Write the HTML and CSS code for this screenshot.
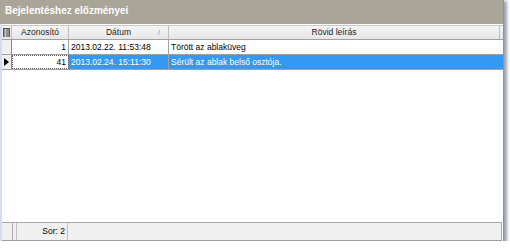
FILE: index.html
```html
<!DOCTYPE html>
<html>
<head>
<meta charset="utf-8">
<link rel="stylesheet" href="styles.css">
</head>
<body>
<div class="window">
  <div class="titlebar">Bejelentéshez előzményei</div>
  <div class="body">
    <div class="grid">
      <div class="row header">
        <div class="cell ind"><svg width="7" height="9" viewBox="0 0 7 9"><rect x="0" y="0" width="7" height="9" fill="#555"/><path d="M1 2h5M1 4h5M1 6h5M1 8h5" stroke="#ccc" stroke-width="1"/><path d="M2.5 1v8" stroke="#ccc"/></svg></div>
        <div class="cell id">Azonosító</div>
        <div class="cell date">Dátum<span class="sort">/</span></div>
        <div class="cell desc">Rövid leírás</div>
      </div>
      <div class="row">
        <div class="cell ind"></div>
        <div class="cell id num">1</div>
        <div class="cell date">2013.02.22. 11:53:48</div>
        <div class="cell desc">Törött az ablaküveg</div>
      </div>
      <div class="row selected">
        <div class="cell ind"><svg width="5" height="8" viewBox="0 0 5 8"><path d="M0 0L5 4L0 8Z" fill="#000"/></svg></div>
        <div class="cell id num focus">41</div>
        <div class="cell date">2013.02.24. 15:11:30</div>
        <div class="cell desc">Sérült az ablak belső osztója.</div>
      </div>
      <div class="filler"></div>
    </div>
    <div class="statusbar">
      <div class="sb-grip"></div>
      <div class="sb-panel">Sor: 2</div>
      <div class="sb-rest"></div>
    </div>
  </div>
</div>
</body>
</html>
```
FILE: styles.css
```css
html, body {
  margin: 0;
  padding: 0;
  background: #ffffff;
}
body {
  font-family: "Liberation Sans", Arial, sans-serif;
  font-size: 8.5px;
  color: #000;
}
.window {
  width: 503px;
  height: 241px;
  display: flex;
  flex-direction: column;
  box-shadow: 2px 2px 3px 1px rgba(120, 130, 145, 0.75);
  background: #fff;
  border-right: 1px solid #8e9296;
}
.titlebar {
  height: 24px;
  flex: none;
  background: #aaa697;
  color: #fff;
  font-weight: bold;
  font-size: 10px;
  line-height: 22px;
  padding-left: 5px;
}
.body {
  flex: 1;
  display: flex;
  flex-direction: column;
  border-left: 2px solid #d3deec;
  border-top: 1px solid #ffffff;
}
.grid {
  flex: 1;
  display: flex;
  flex-direction: column;
  background: #fff;
}
.row {
  display: flex;
  height: 14px;
  border-bottom: 1px solid #a0a0a0;
}
.row.header {
  height: 13px;
  background: linear-gradient(#f5f5f5, #e6e6e6);
  border-top: 1px solid #c9c9c9;
}
.cell {
  border-right: 1px solid #a0a0a0;
  line-height: 14px;
  white-space: nowrap;
  overflow: hidden;
  padding: 0 2px;
  box-sizing: border-box;
}
.header .cell {
  text-align: center;
  line-height: 13px;
  color: #222;
  border-right-color: #bdbdbd;
}
.ind {
  width: 10px;
  padding: 0;
  display: flex;
  align-items: center;
  justify-content: center;
  background: #f0f0f0;
  border-right-color: #8a8a8a;
}
.header .ind {
  background: transparent;
}
.id { width: 57px; }
.date {
  width: 100px;
  position: relative;
}
.desc {
  flex: 1;
  border-right: none;
}
.header .desc { border-right: 1px solid #bdbdbd; margin-right: 3px; }
.sort {
  position: absolute;
  right: 8px;
  top: 0;
  color: #888;
  font-size: 7px;
}
.num { text-align: right; }
.selected .date,
.selected .desc {
  background: #3399f3;
  color: #fff;
}
.selected .focus {
  background: #fff;
  outline: 1px dotted #555;
  outline-offset: -1px;
}
.filler { flex: 1; }
.statusbar {
  height: 17px;
  flex: none;
  display: flex;
  background: #f0f0f0;
  border-top: 1px solid #a8a8a8;
  border-bottom: 1px solid #9a9ea4;
  margin-right: 1px;
  line-height: 17px;
}
.sb-grip {
  width: 10px;
  border-right: 1px solid #a8a8a8;
}
.sb-panel {
  width: 52px;
  margin-left: 3px;
  border-left: 1px solid #c0c0c0;
  border-right: 1px solid #c0c0c0;
  text-align: right;
  padding-right: 2px;
  box-sizing: border-box;
}
.sb-rest {
  flex: 1;
  border-right: 1px solid #a8a8a8;
}
```
